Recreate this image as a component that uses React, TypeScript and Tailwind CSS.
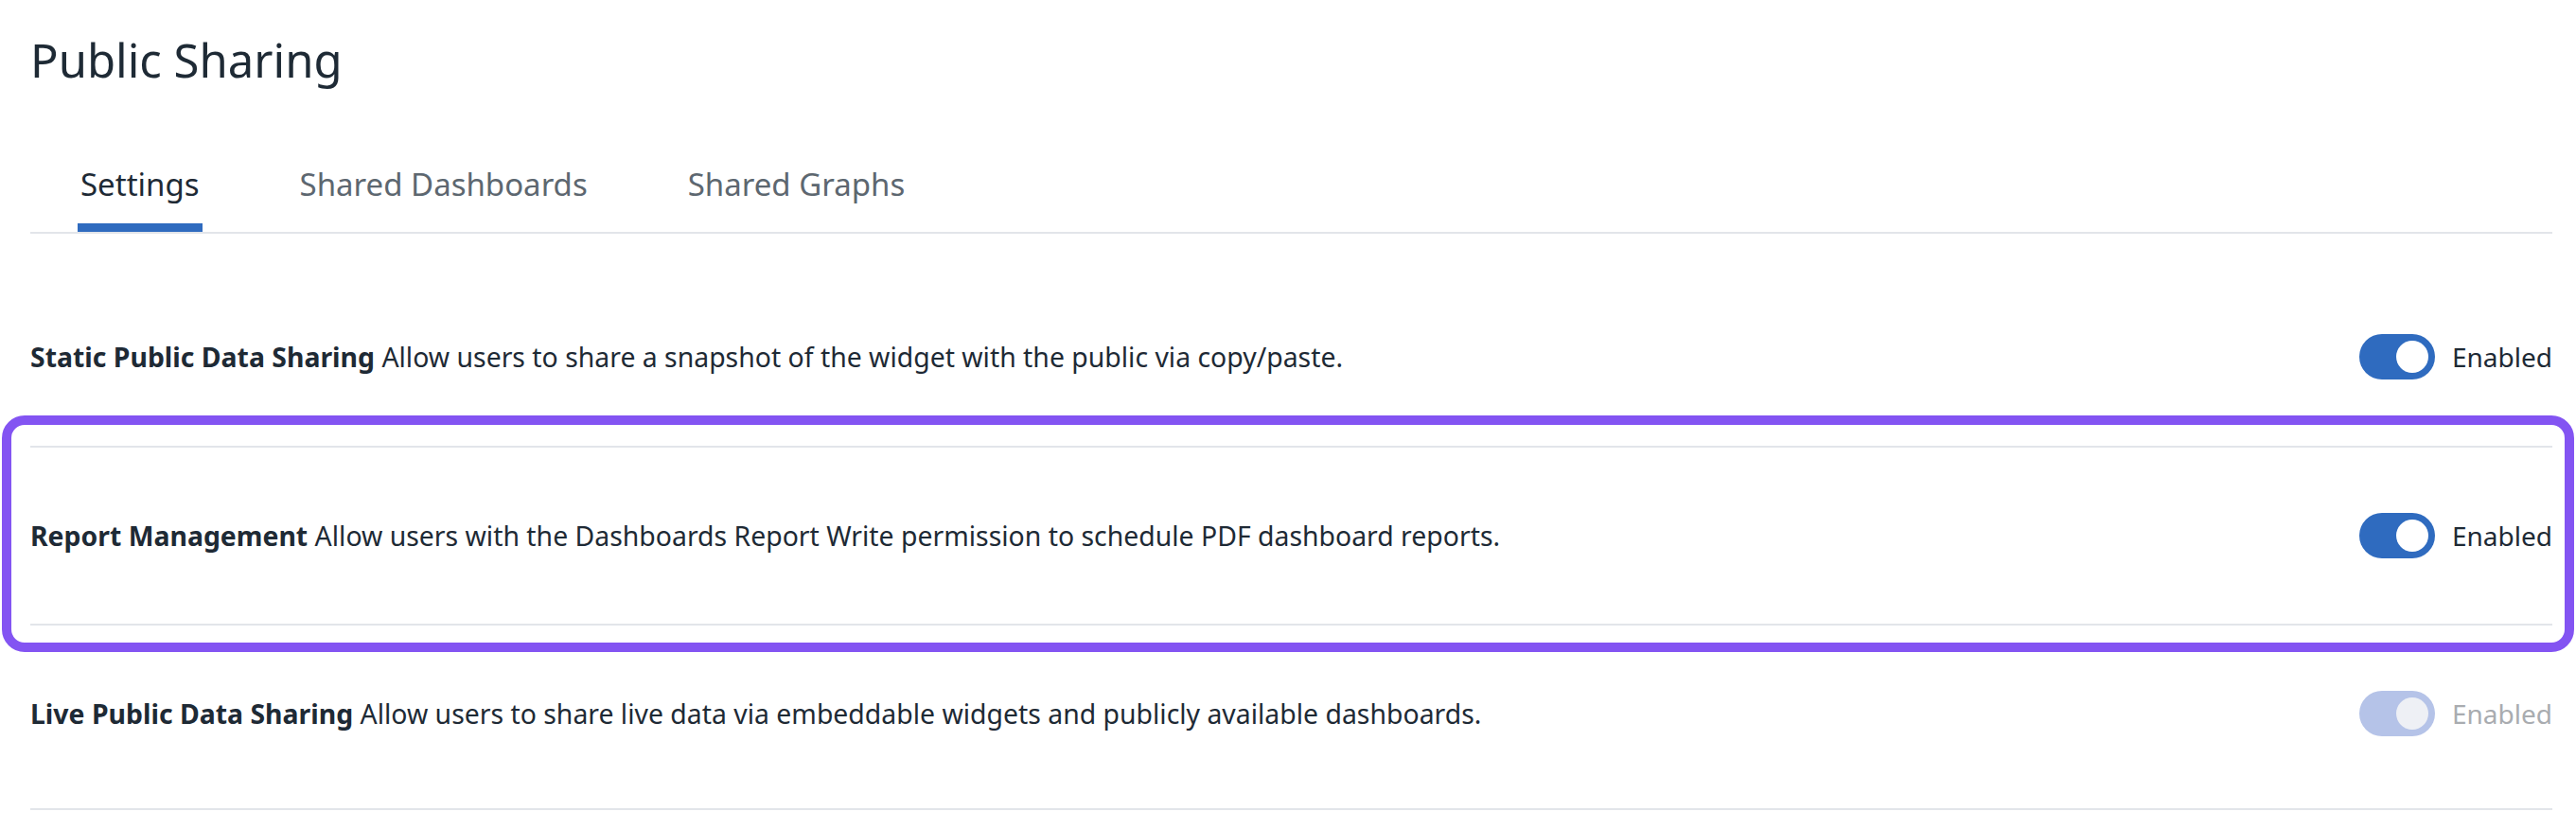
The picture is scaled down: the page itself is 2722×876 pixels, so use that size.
import { useState } from 'react'

interface Setting {
  id: string
  title: string
  description: string
  enabled: boolean
  disabled?: boolean
}

const settings: Setting[] = [
  {
    id: 'static',
    title: 'Static Public Data Sharing',
    description: 'Allow users to share a snapshot of the widget with the public via copy/paste.',
    enabled: true,
  },
  {
    id: 'report',
    title: 'Report Management',
    description: 'Allow users with the Dashboards Report Write permission to schedule PDF dashboard reports.',
    enabled: true,
  },
  {
    id: 'live',
    title: 'Live Public Data Sharing',
    description: 'Allow users to share live data via embeddable widgets and publicly available dashboards.',
    enabled: true,
    disabled: true,
  },
]

const tabs = ['Settings', 'Shared Dashboards', 'Shared Graphs']

function Toggle({ on, disabled }: { on: boolean; disabled?: boolean }) {
  return (
    <div className="flex items-center gap-[18px]">
      <div
        className={`flex h-[48px] w-[80px] items-center rounded-full px-[7px] ${
          disabled ? 'bg-[#b5c3e8]' : 'bg-[#2f6bbf]'
        } ${on ? 'justify-end' : 'justify-start'}`}
      >
        <div className={`h-[34px] w-[34px] rounded-full ${disabled ? 'bg-[#eef0f5]' : 'bg-white'}`} />
      </div>
      <span className={`text-[28px] leading-[40px] ${disabled ? 'text-[#a9acb0]' : 'text-[#1e2a35]'}`}>
        Enabled
      </span>
    </div>
  )
}

export default function App() {
  const [active, setActive] = useState('Settings')

  return (
    <div
      className="relative min-h-[876px] bg-white pt-[29px] pl-[32px] pr-[25px] text-[#1e2a35]"
      style={{ fontFamily: '"Noto Sans", "Open Sans", sans-serif' }}
    >
      <h1 className="text-[49px] leading-[68px] font-normal">Public Sharing</h1>

      <div className="mt-[76px] flex border-b-2 border-[#e2e5ea]">
        {tabs.map((tab) => (
          <button
            key={tab}
            onClick={() => setActive(tab)}
            className="px-[50px] text-[33px] leading-[44px]"
          >
            <span
              className={`block border-b-[9px] px-[3px] pb-[19px] ${
                active === tab ? 'border-[#2f6bbf] text-[#1e2a35]' : 'border-transparent text-[#5d6770]'
              }`}
            >
              {tab}
            </span>
          </button>
        ))}
      </div>

      <div className="mt-9">
        {settings.map((s, i) => (
          <div
            key={s.id}
            className={`flex items-center justify-between border-[#e2e5ea] ${
              i === 0 ? 'h-[188px]' : i === settings.length - 1 ? 'h-[197px] border-t-2 border-b-2 pb-2' : 'h-[188px] border-t-2'
            }`}
          >
            <p className="text-[28.4px] leading-[40px]">
              <span className="font-bold">{s.title}</span> {s.description}
            </p>
            <Toggle on={s.enabled} disabled={s.disabled} />
          </div>
        ))}
      </div>

      {/* highlight around the report management row */}
      <div className="pointer-events-none absolute top-[439px] left-[2px] right-[2px] h-[250px] rounded-[24px] border-[10px] border-[#8354f2]" />
    </div>
  )
}
